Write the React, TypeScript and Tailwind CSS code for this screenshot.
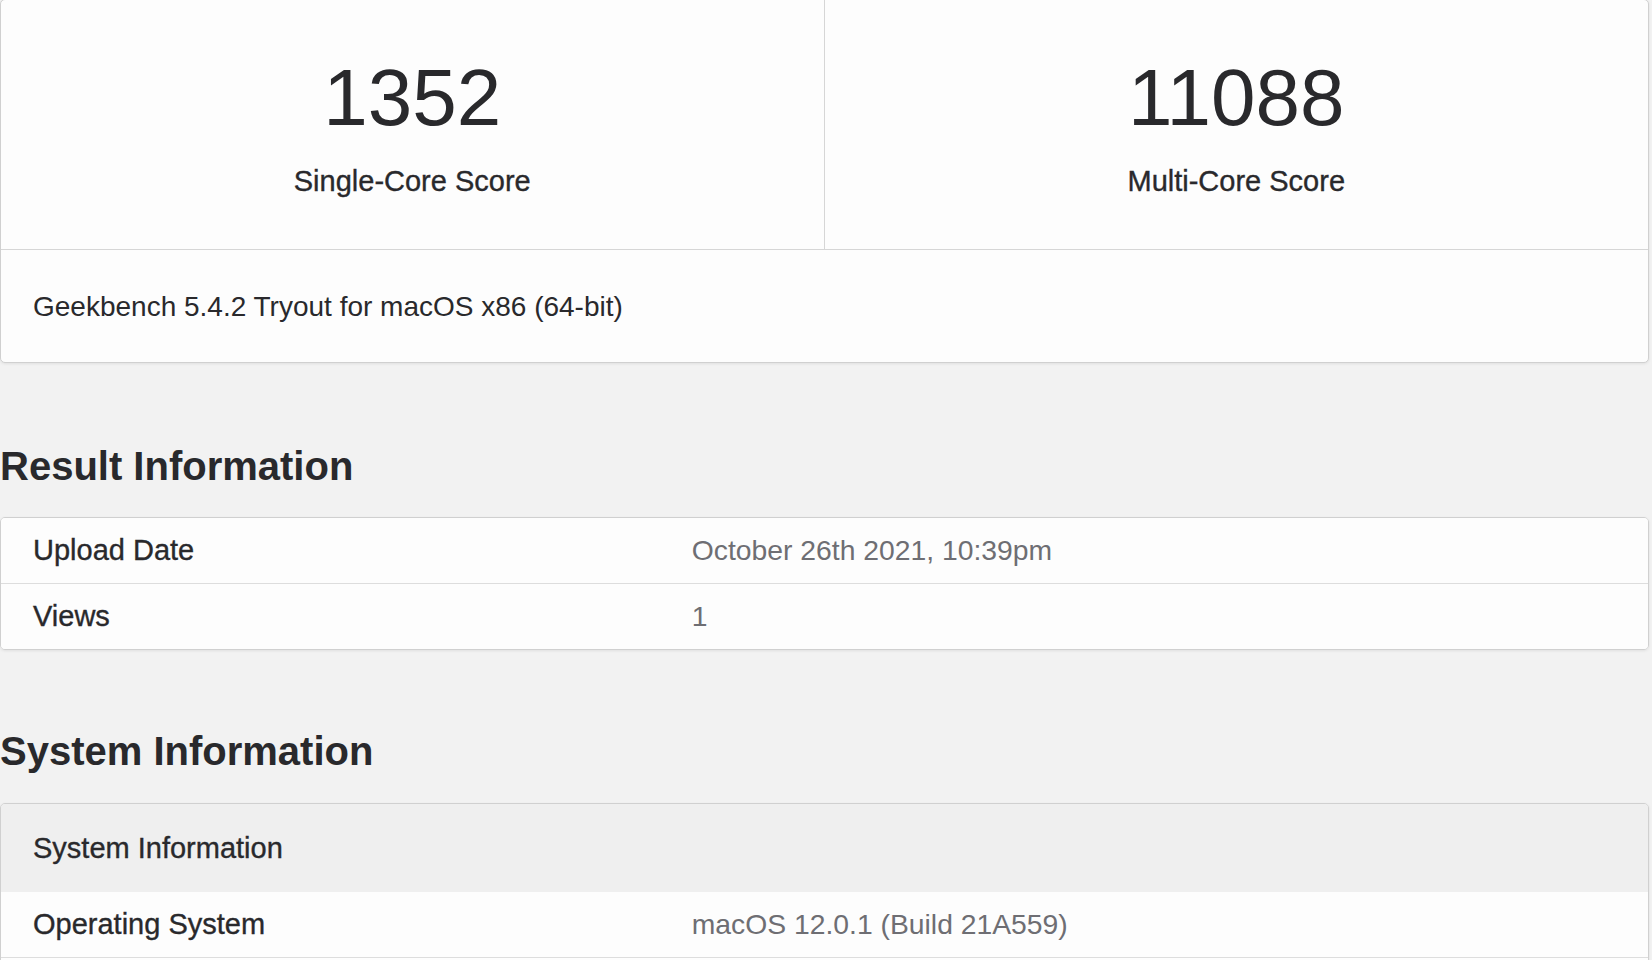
import React from 'react';

const resultRows = [
  { label: 'Upload Date', value: 'October 26th 2021, 10:39pm' },
  { label: 'Views', value: '1' },
];

const systemRows = [
  { label: 'Operating System', value: 'macOS 12.0.1 (Build 21A559)' },
  { label: '', value: '' },
];

const medium = '[-webkit-text-stroke:0.35px_currentColor]';

const ScoreCell = ({ score, label, divider }: { score: string; label: string; divider?: boolean }) => (
  <div className={`flex flex-col items-center pt-[58px] pb-[54px] ${divider ? 'border-r border-[#d6d6d6]' : ''}`}>
    <div className="text-[80px] leading-[80px] text-[#29292c]">{score}</div>
    <div className={`mt-[29px] text-[29px] leading-[28px] text-[#29292c] ${medium}`}>{label}</div>
  </div>
);

const InfoRow = ({ label, value, last }: { label: string; value: string; last?: boolean }) => (
  <div className={`flex bg-[#fdfdfd] ${last ? '' : 'border-b border-[#dddddd]'}`}>
    <div className={`w-2/5 px-[32px] py-[18px] text-[29px] leading-[29px] text-[#29292c] ${medium}`}>{label}</div>
    <div className="w-3/5 px-[32px] py-[18px] text-[28.3px] leading-[29px] text-[#6e6e73]">{value}</div>
  </div>
);

export default function App() {
  return (
    <div className="min-h-screen overflow-hidden bg-[#f2f2f2] font-['Liberation_Sans',Arial,sans-serif]">
      <div className="w-[1649px]">
        <div className="-mt-px overflow-hidden rounded-[5px] border border-[#d0d0d0] bg-[#fdfdfd] shadow-[0_1px_3px_rgba(0,0,0,0.08)]">
          <div className="grid grid-cols-2 border-b border-[#d6d6d6]">
            <ScoreCell score="1352" label="Single-Core Score" divider />
            <ScoreCell score="11088" label="Multi-Core Score" />
          </div>
          <div className="px-[32px] pt-[43px] pb-[41px] text-[28px] leading-[28px] text-[#29292c]">
            Geekbench 5.4.2 Tryout for macOS x86 (64-bit)
          </div>
        </div>

        <h2 className="mt-[83px] mb-[31px] text-[40px] leading-[40px] font-bold text-[#29292c]">Result Information</h2>
        <div className="overflow-hidden rounded-[5px] border border-[#d0d0d0] shadow-[0_1px_3px_rgba(0,0,0,0.08)]">
          {resultRows.map((r, i) => (
            <InfoRow key={r.label} label={r.label} value={r.value} last={i === resultRows.length - 1} />
          ))}
        </div>

        <h2 className="mt-[81px] mb-[32px] text-[40px] leading-[40px] font-bold text-[#29292c]">System Information</h2>
        <div className="overflow-hidden rounded-[5px] border border-[#d0d0d0] shadow-[0_1px_3px_rgba(0,0,0,0.08)]">
          <div className={`bg-[#efefef] px-[32px] py-[30px] text-[29px] leading-[28px] text-[#29292c] ${medium}`}>
            System Information
          </div>
          {systemRows.map((r, i) => (
            <InfoRow key={i} label={r.label} value={r.value} last={i === systemRows.length - 1} />
          ))}
        </div>
      </div>
    </div>
  );
}
